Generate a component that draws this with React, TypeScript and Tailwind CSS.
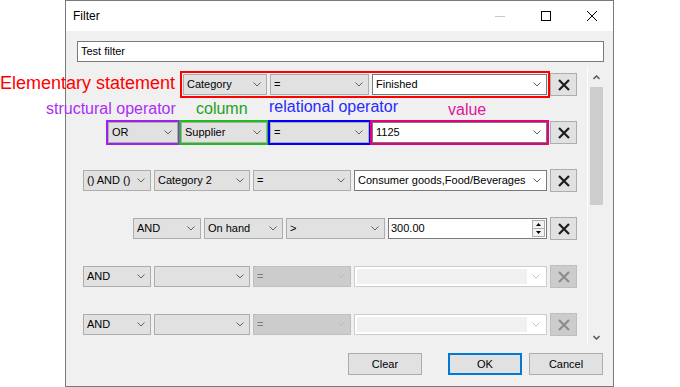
import React from 'react';

type Kind = 'gray' | 'white' | 'off' | 'offWhite';

const kindClasses: Record<Kind, string> = {
  gray: 'bg-[#e1e1e1] border-[#adadad]',
  white: 'bg-white border-[#7a7a7a]',
  off: 'bg-[#cccccc] border-[#bfbfbf] text-[#7d7d7d]',
  offWhite: 'bg-white border-[#cccccc]',
};

function Chevron({ color = '#606060' }: { color?: string }) {
  return (
    <svg width="8" height="5" viewBox="0 0 8 5" className="shrink-0">
      <polyline points="0.5,0.5 4,4 7.5,0.5" fill="none" stroke={color} strokeWidth="1" />
    </svg>
  );
}

interface ComboProps {
  text?: string;
  kind?: Kind;
  className?: string;
}

function Combo({ text = '', kind = 'gray', className = '' }: ComboProps) {
  if (kind === 'offWhite') {
    return (
      <div className={`h-[21px] border flex items-center py-[2px] pl-[2px] pr-[6px] ${kindClasses[kind]} ${className}`}>
        <div className="flex-1 self-stretch bg-[#f0f0f0] mr-[5px]" />
        <Chevron color="#c4c4c4" />
      </div>
    );
  }
  return (
    <div className={`h-[21px] border flex items-center pl-[3px] pr-[5px] ${kindClasses[kind]} ${className}`}>
      <span className="flex-1 whitespace-nowrap overflow-hidden">{text}</span>
      <Chevron color={kind === 'off' ? '#bdbdbd' : '#606060'} />
    </div>
  );
}

function NumberBox({ value, className = '' }: { value: string; className?: string }) {
  return (
    <div className={`h-[21px] border border-[#7a7a7a] bg-white flex items-center pl-[2px] pr-[1px] ${className}`}>
      <span className="flex-1">{value}</span>
      <div className="w-[13px] h-[17px] flex flex-col">
        <div className="flex-1 border border-[#adadad] bg-[#f2f2f2] flex items-center justify-center">
          <svg width="5" height="3" viewBox="0 0 5 3">
            <polygon points="2.5,0 5,3 0,3" fill="#000" />
          </svg>
        </div>
        <div className="flex-1 border border-t-0 border-[#adadad] bg-[#f2f2f2] flex items-center justify-center">
          <svg width="5" height="3" viewBox="0 0 5 3">
            <polygon points="0,0 5,0 2.5,3" fill="#000" />
          </svg>
        </div>
      </div>
    </div>
  );
}

function RemoveButton({ disabled = false }: { disabled?: boolean }) {
  const stroke = disabled ? '#8c8c8c' : '#1e1e1e';
  return (
    <div
      className={`w-[27px] h-[23px] border flex items-center justify-center ${
        disabled ? 'bg-[#cccccc] border-[#bfbfbf]' : 'bg-[#e1e1e1] border-[#adadad]'
      }`}
    >
      <svg width="12" height="12" viewBox="0 0 12 12">
        <path d="M1 1 L11 11 M11 1 L1 11" stroke={stroke} strokeWidth="2.2" />
      </svg>
    </div>
  );
}

function Row({ children }: { children: React.ReactNode }) {
  return <div className="h-[23px] flex items-center justify-end gap-[3px]">{children}</div>;
}

function DialogButton({ label, primary = false }: { label: string; primary?: boolean }) {
  return (
    <div
      className={`w-[74px] h-[22px] bg-[#e1e1e1] flex items-center justify-center ${
        primary ? 'border-2 border-[#0078d7]' : 'border border-[#adadad]'
      }`}
    >
      {label}
    </div>
  );
}

export default function App() {
  return (
    <div className="relative w-[680px] h-[387px] bg-white overflow-hidden font-['Liberation_Sans',Arial,sans-serif] text-[11px] text-black">
      {/* Window */}
      <div className="ml-[65px] w-[549px] h-[387px] border border-[#7a7a7a] bg-[#f0f0f0] flex flex-col">
        {/* Title bar */}
        <div className="h-[30px] shrink-0 bg-white flex items-center pl-[7px] pr-[16px]">
          <span className="text-[12px]">Filter</span>
          <div className="ml-auto flex items-center gap-[36px]">
            <svg width="10" height="10" viewBox="0 0 10 10">
              <line x1="0" y1="5.5" x2="10" y2="5.5" stroke="#c8c8c8" strokeWidth="1" />
            </svg>
            <svg width="10" height="10" viewBox="0 0 10 10">
              <rect x="0.5" y="0.5" width="9" height="9" fill="none" stroke="#000" strokeWidth="1" />
            </svg>
            <svg width="10" height="10" viewBox="0 0 10 10">
              <path d="M0 0 L10 10 M10 0 L0 10" stroke="#000" strokeWidth="1" />
            </svg>
          </div>
        </div>

        {/* Client area */}
        <div className="flex-1 flex flex-col">
          <div className="mt-[10px] ml-[11px] w-[527px] h-[21px] bg-white border border-[#7a7a7a] flex items-center pl-[3px]">
            Test filter
          </div>

          <div className="mt-[5px] h-[278px] flex">
            {/* Statements */}
            <div className="flex-1 flex flex-col pt-[6px] gap-[25px] pr-[10px]">
              <Row>
                <div className="flex gap-[3px] outline-2 outline-[#ff0000] outline-offset-1">
                  <Combo text="Category" className="w-[84px]" />
                  <Combo text="=" className="w-[99px]" />
                  <Combo text="Finished" kind="white" className="w-[175px]" />
                </div>
                <RemoveButton />
              </Row>
              <Row>
                <Combo text="OR" className="w-[70px] outline-2 outline-[#a020f0]" />
                <Combo text="Supplier" className="w-[86px] outline-2 outline-[#1cbf1c]" />
                <Combo text="=" className="w-[99px] outline-2 outline-[#0000ff]" />
                <Combo text="1125" kind="white" className="w-[175px] outline-2 outline-[#e6007e]" />
                <RemoveButton />
              </Row>
              <Row>
                <Combo text="() AND ()" className="w-[68px]" />
                <Combo text="Category 2" className="w-[96px]" />
                <Combo text="=" className="w-[98px]" />
                <Combo text="Consumer goods,Food/Beverages" kind="white" className="w-[193px]" />
                <RemoveButton />
              </Row>
              <Row>
                <Combo text="AND" className="w-[68px]" />
                <Combo text="On hand" className="w-[79px]" />
                <Combo text=">" className="w-[99px]" />
                <NumberBox value="300.00" className="w-[159px]" />
                <RemoveButton />
              </Row>
              <Row>
                <Combo text="AND" className="w-[68px]" />
                <Combo className="w-[96px]" />
                <Combo text="=" kind="off" className="w-[98px]" />
                <Combo kind="offWhite" className="w-[193px]" />
                <RemoveButton disabled />
              </Row>
              <Row>
                <Combo text="AND" className="w-[68px]" />
                <Combo className="w-[96px]" />
                <Combo text="=" kind="off" className="w-[98px]" />
                <Combo kind="offWhite" className="w-[193px]" />
                <RemoveButton disabled />
              </Row>
            </div>

            {/* Scrollbar */}
            <div className="w-px bg-white" />
            <div className="w-[17px] flex flex-col">
              <div className="h-[20px] flex items-center justify-center">
                <svg width="7" height="5" viewBox="0 0 7 5">
                  <polyline points="0.5,4 3.5,1 6.5,4" fill="none" stroke="#606060" strokeWidth="1.6" />
                </svg>
              </div>
              <div className="h-[118px] mx-[2px] bg-[#cdcdcd]" />
              <div className="flex-1" />
              <div className="h-[15px] flex items-center justify-center">
                <svg width="7" height="5" viewBox="0 0 7 5">
                  <polyline points="0.5,1 3.5,4 6.5,1" fill="none" stroke="#606060" strokeWidth="1.6" />
                </svg>
              </div>
            </div>
            <div className="w-[8px]" />
          </div>

          <div className="mt-[8px] flex justify-end gap-[7px] pr-[10px]">
            <div className="mr-[19px]">
              <DialogButton label="Clear" />
            </div>
            <DialogButton label="OK" primary />
            <DialogButton label="Cancel" />
          </div>
        </div>
      </div>

      {/* Annotations */}
      <span className="absolute left-0 top-[74px] text-[18px] leading-none text-[#ff0000] whitespace-nowrap">
        Elementary statement
      </span>
      <span className="absolute left-[46px] top-[101px] text-[16px] leading-none text-[#aa2ef5] whitespace-nowrap">
        structural operator
      </span>
      <span className="absolute left-[196px] top-[101px] text-[16px] leading-none text-[#23a023] whitespace-nowrap">
        column
      </span>
      <span className="absolute left-[269px] top-[99px] text-[16px] leading-none text-[#2a2aff] whitespace-nowrap">
        relational operator
      </span>
      <span className="absolute left-[448px] top-[102px] text-[16px] leading-none text-[#e0159a] whitespace-nowrap">
        value
      </span>
    </div>
  );
}
